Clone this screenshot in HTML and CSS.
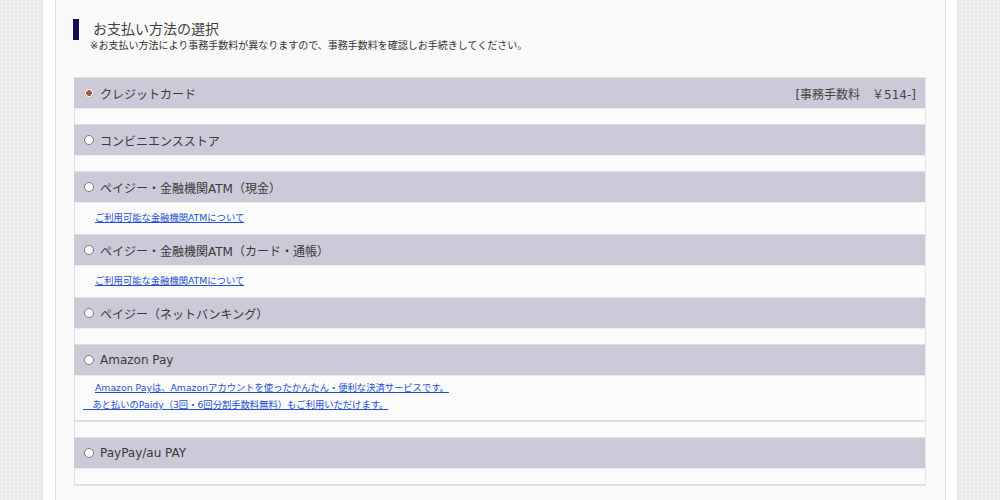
FILE: index.html
```html
<!DOCTYPE html>
<html lang="ja">
<head>
<meta charset="utf-8">
<title>お支払い方法の選択</title>
<link rel="stylesheet" href="styles.css">
</head>
<body>
<div class="wrapper">
  <div class="panel">
    <h2 class="section-title">お支払い方法の選択</h2>
    <p class="section-note">※お支払い方法により事務手数料が異なりますので、事務手数料を確認しお手続きしてください。</p>

    <div class="pay-list">
      <div class="pay-row">
        <div class="pay-head">
          <span class="radio checked"></span>
          <span class="pay-label">クレジットカード</span>
          <span class="pay-fee">[事務手数料　￥514-]</span>
        </div>
        <div class="pay-body"></div>
      </div>

      <div class="pay-row">
        <div class="pay-head">
          <span class="radio"></span>
          <span class="pay-label">コンビニエンスストア</span>
        </div>
        <div class="pay-body"></div>
      </div>

      <div class="pay-row">
        <div class="pay-head">
          <span class="radio"></span>
          <span class="pay-label">ペイジー・金融機関ATM（現金）</span>
        </div>
        <div class="pay-body link-body">
          <a class="pay-link" href="#">ご利用可能な金融機関ATMについて</a>
        </div>
      </div>

      <div class="pay-row">
        <div class="pay-head">
          <span class="radio"></span>
          <span class="pay-label">ペイジー・金融機関ATM（カード・通帳）</span>
        </div>
        <div class="pay-body link-body">
          <a class="pay-link" href="#">ご利用可能な金融機関ATMについて</a>
        </div>
      </div>

      <div class="pay-row">
        <div class="pay-head">
          <span class="radio"></span>
          <span class="pay-label">ペイジー（ネットバンキング）</span>
        </div>
        <div class="pay-body"></div>
      </div>

      <div class="pay-row">
        <div class="pay-head">
          <span class="radio"></span>
          <span class="pay-label">Amazon Pay</span>
        </div>
        <div class="pay-body amazon-body">
          <p class="amazon-text"><a class="pay-link" href="#">Amazon Payは、Amazonアカウントを使ったかんたん・便利な決済サービスです。<br>　あと払いのPaidy（3回・6回分割手数料無料）もご利用いただけます。</a></p>
        </div>
        <div class="pay-body"></div>
      </div>

      <div class="pay-row">
        <div class="pay-head">
          <span class="radio"></span>
          <span class="pay-label">PayPay/au PAY</span>
        </div>
        <div class="pay-body"></div>
      </div>
    </div>
  </div>
</div>
</body>
</html>
```
FILE: styles.css
```css
html, body {
  margin: 0;
  padding: 0;
  height: 100%;
}

body {
  background-color: #ebebeb;
  background-image: radial-gradient(circle, #f5f5f5 0.9px, transparent 1.3px);
  background-size: 4px 4px;
  font-family: "DejaVu Sans", "Noto Sans CJK JP", sans-serif;
  color: #333;
}

.wrapper {
  width: 914px;
  margin: 0 auto;
  min-height: 500px;
  background: #fff;
  padding: 0 11px 0 12px;
  box-sizing: border-box;
  box-shadow: 0 0 3px rgba(0, 0, 0, 0.12);
}

.panel {
  min-height: 500px;
  box-sizing: border-box;
  background: #fafafa;
  border-left: 1px solid #dcdcdc;
  border-right: 1px solid #dcdcdc;
  padding: 19px 19px 0 17px;
}

.section-title {
  margin: 0;
  border-left: 6px solid #170b50;
  padding-left: 14px;
  height: 21px;
  line-height: 21px;
  font-size: 14px;
  font-weight: normal;
  color: #3f3f3f;
}

.section-note {
  margin: 0 0 0 17px;
  font-size: 10px;
  line-height: 12px;
  color: #333;
}

.pay-list {
  margin: 25px 0 0 1px;
  border-left: 1px solid #dedede;
  border-right: 1px solid #e6e6e6;
  border-bottom: 2px solid #dedede;
}

.pay-head {
  display: flex;
  align-items: center;
  height: 30px;
  padding: 0 9px 0 9.5px;
  background: #cccad9;
  border-top: 1px solid #e0e0e0;
  border-bottom: 1px solid #ececec;
  margin-left: -1px;
}

.radio {
  width: 8px;
  height: 8px;
  border-radius: 50%;
  border: 1px solid #7a7a7a;
  background: #fff;
  flex: none;
}

.radio.checked {
  border-color: #d9bfb0;
  background: radial-gradient(circle, #9c5f45 0, #9c5f45 2.6px, #fff 3.2px);
}

.pay-label {
  margin-left: 6.5px;
  font-size: 12px;
  color: #3a3a3a;
}

.pay-fee {
  margin-left: auto;
  font-size: 12px;
  color: #4a4444;
}

.pay-body {
  min-height: 15px;
  background: #fbfbfb;
}

.link-body {
  min-height: 0;
  padding: 7px 0 10px 20px;
  line-height: 12px;
}

.pay-link {
  font-size: 9.3px;
  color: #2350d2;
  text-decoration: underline;
}

.amazon-body {
  padding: 3px 0 7px 8px;
  border-bottom: 2px solid #dedede;
}

.amazon-text {
  margin: 0;
  line-height: 17px;
  text-indent: 12px;
  font-size: 9.3px;
}
```
